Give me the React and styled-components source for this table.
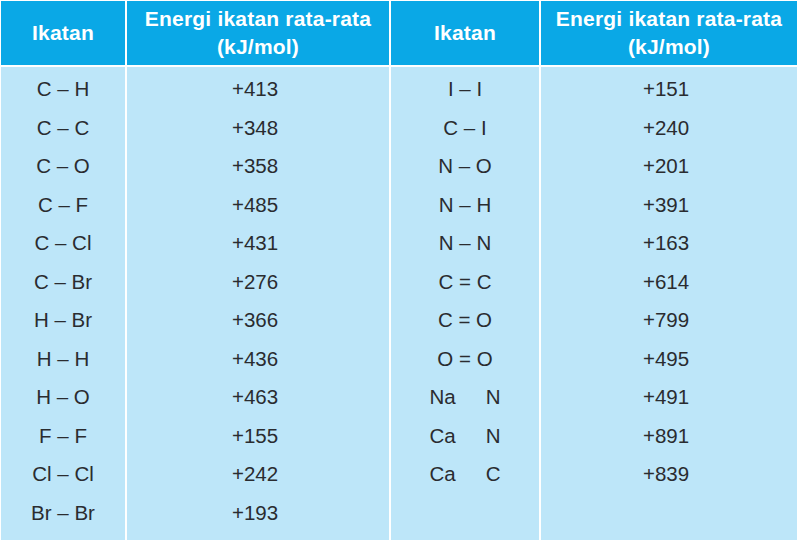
import React from 'react'
import styled, { createGlobalStyle } from 'styled-components'

const GlobalStyle = createGlobalStyle`
  html, body {
    margin: 0;
    padding: 0;
    background: #ffffff;
  }
  body {
    font-family: "Liberation Sans", Arial, sans-serif;
  }
`

const left = [
  ['C – H', '+413'],
  ['C – C', '+348'],
  ['C – O', '+358'],
  ['C – F', '+485'],
  ['C – Cl', '+431'],
  ['C – Br', '+276'],
  ['H – Br', '+366'],
  ['H – H', '+436'],
  ['H – O', '+463'],
  ['F – F', '+155'],
  ['Cl – Cl', '+242'],
  ['Br – Br', '+193'],
]

// pairs are rows where the bond symbol is missing in the source
const right = [
  ['I – I', '+151'],
  ['C – I', '+240'],
  ['N – O', '+201'],
  ['N – H', '+391'],
  ['N – N', '+163'],
  ['C = C', '+614'],
  ['C = O', '+799'],
  ['O = O', '+495'],
  [['Na', 'N'], '+491'],
  [['Ca', 'N'], '+891'],
  [['Ca', 'C'], '+839'],
]

function App() {
  return (
    <Page>
      <GlobalStyle />
      <Table>
        <Head>Ikatan</Head>
        <Head>Energi ikatan rata-rata<br />(kJ/mol)</Head>
        <Head>Ikatan</Head>
        <Head>Energi ikatan rata-rata<br />(kJ/mol)</Head>

        <Body>
          {left.map(([b]) => <Cell key={b}>{b}</Cell>)}
        </Body>
        <Body $shift>
          {left.map(([b, v]) => <Cell key={b}>{v}</Cell>)}
        </Body>
        <Body>
          {right.map(([b], i) => (
            <Cell key={i}>
              {Array.isArray(b) ? <Split><span>{b[0]}</span><span>{b[1]}</span></Split> : b}
            </Cell>
          ))}
        </Body>
        <Body $shift>
          {right.map(([b, v], i) => <Cell key={i}>{v}</Cell>)}
        </Body>
      </Table>
    </Page>
  )
}

const Page = styled.div`
  padding: 1px 0 0 1px;
  width: 799px;
  height: 543px;
  box-sizing: border-box;
  background: #fff;
`

const Table = styled.div`
  display: grid;
  grid-template-columns: 124px 262px 148px 256px;
  grid-template-rows: 64px 473px;
  gap: 2px;
  width: 796px;
  background: #ffffff;
`

const Head = styled.div`
  background: #0aa8e6;
  color: #ffffff;
  font-weight: 700;
  font-size: 21px;
  line-height: 28px;
  text-align: center;
  display: flex;
  align-items: center;
  justify-content: center;
  letter-spacing: 0.2px;
`

const Body = styled.div`
  background: #bde6f9;
  padding-top: 3px;
  display: flex;
  flex-direction: column;
  padding-right: ${p => (p.$shift ? '6px' : '0')};
`

const Cell = styled.div`
  height: 38.5px;
  line-height: 38.5px;
  font-size: 20.5px;
  color: #2a2c30;
  text-align: center;
`

const Split = styled.span`
  display: inline-flex;
  gap: 30px;
`

export default App
